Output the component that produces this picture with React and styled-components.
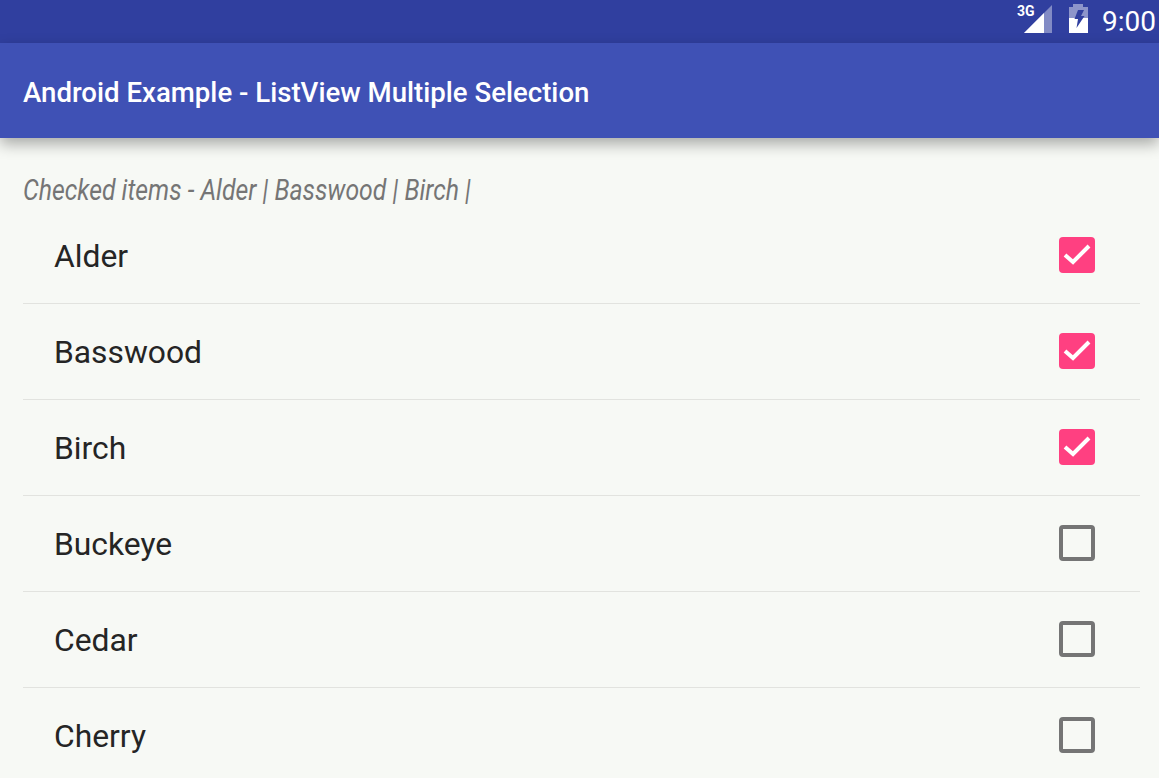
import React from "react";
import styled, { createGlobalStyle } from "styled-components";

const items = [
  { name: "Alder", checked: true },
  { name: "Basswood", checked: true },
  { name: "Birch", checked: true },
  { name: "Buckeye", checked: false },
  { name: "Cedar", checked: false },
  { name: "Cherry", checked: false },
];

const GlobalStyle = createGlobalStyle`
  html, body {
    margin: 0;
    height: 100%;
    overflow: hidden;
    background: #f7f9f5;
    font-family: Roboto, "Liberation Sans", sans-serif;
  }
`;

const Screen = styled.div`
  width: 1159px;
  height: 778px;
  overflow: hidden;
  display: flex;
  flex-direction: column;
  background: #f7f9f5;
`;

const StatusBar = styled.div`
  height: 43px;
  flex-shrink: 0;
  background: #303f9f;
  display: flex;
  align-items: center;
  justify-content: flex-end;
  padding-right: 3px;
  color: #fff;
`;

const StatusIcons = styled.div`
  display: flex;
  align-items: flex-end;
  gap: 15px;
  margin: 0 14px 9px 0;
`;

const Clock = styled.span`
  font-size: 28px;
  font-weight: 400;
  line-height: 43px;
  margin-bottom: 1px;
`;

const Toolbar = styled.header`
  height: 95px;
  flex-shrink: 0;
  background: #3f51b5;
  display: flex;
  align-items: center;
  padding-left: 23px;
  box-shadow: 0 6px 14px rgba(0, 0, 0, 0.32);
  position: relative;
`;

const Title = styled.h1`
  margin: 4px 0 0;
  font-size: 27.6px;
  font-weight: 500;
  color: #fff;
`;

const Content = styled.main`
  padding: 35px 19px 0 23px;
`;

const CheckedLine = styled.div`
  font-size: 28.5px;
  line-height: 35px;
  font-style: italic;
  color: #757575;
  transform: scaleX(0.87);
  transform-origin: left center;
  white-space: nowrap;
`;

const List = styled.ul`
  list-style: none;
  margin: 0;
  padding: 0;
`;

const Row = styled.li`
  height: 95px;
  display: flex;
  align-items: center;
  justify-content: space-between;
  padding: 0 45px 0 32px;
  border-bottom: 1px solid #e2e3df;
  color: #252525;
`;

const Label = styled.span`
  font-size: 31.8px;
  margin: 0 0 0 -1px;
`;

const Box = styled.span`
  width: 36px;
  height: 36px;
  box-sizing: border-box;
  border-radius: 4px;
  margin-bottom: 2px;
  display: flex;
  align-items: center;
  justify-content: center;
  background: ${(p) => (p.$checked ? "#ff4081" : "transparent")};
  border: ${(p) => (p.$checked ? "none" : "4px solid #757575")};
`;

function SignalIcon() {
  return (
    <svg width="36" height="32" viewBox="0 -4 36 32" style={{ display: "block" }}>
      <text x="0" y="11" fontSize="14" fontWeight="700" fill="#fff" fontFamily="Roboto, sans-serif">
        3G
      </text>
      <path d="M35 0V28H7z" fill="#fff" fillOpacity="0.4" />
      <path d="M27 8V28H7z" fill="#fff" />
    </svg>
  );
}

function BatteryIcon() {
  return (
    <svg width="20" height="29" viewBox="0 0 20 29" style={{ display: "block" }}>
      <path d="M5 0h10v3h5v26H1V3h4z" fill="#fff" fillOpacity="0.45" />
      <path d="M1 14h19v15H1z" fill="#fff" />
      <path d="M10 6h6l-3 6h3.5L8.5 24l1.5-9H6.5z" fill="#303f9f" />
    </svg>
  );
}

function Check() {
  return (
    <svg width="30" height="24" viewBox="0 0 30 24" fill="none">
      <path d="M3 12l8 7L27 3" stroke="#fff" strokeWidth="4" />
    </svg>
  );
}

export default function App() {
  return (
    <Screen>
      <GlobalStyle />
      <StatusBar>
        <StatusIcons>
          <SignalIcon />
          <BatteryIcon />
        </StatusIcons>
        <Clock>9:00</Clock>
      </StatusBar>
      <Toolbar>
        <Title>Android Example - ListView Multiple Selection</Title>
      </Toolbar>
      <Content>
        <CheckedLine>Checked items - Alder | Basswood | Birch |</CheckedLine>
        <List>
          {items.map((item) => (
            <Row key={item.name}>
              <Label>{item.name}</Label>
              <Box $checked={item.checked}>{item.checked && <Check />}</Box>
            </Row>
          ))}
        </List>
      </Content>
    </Screen>
  );
}
